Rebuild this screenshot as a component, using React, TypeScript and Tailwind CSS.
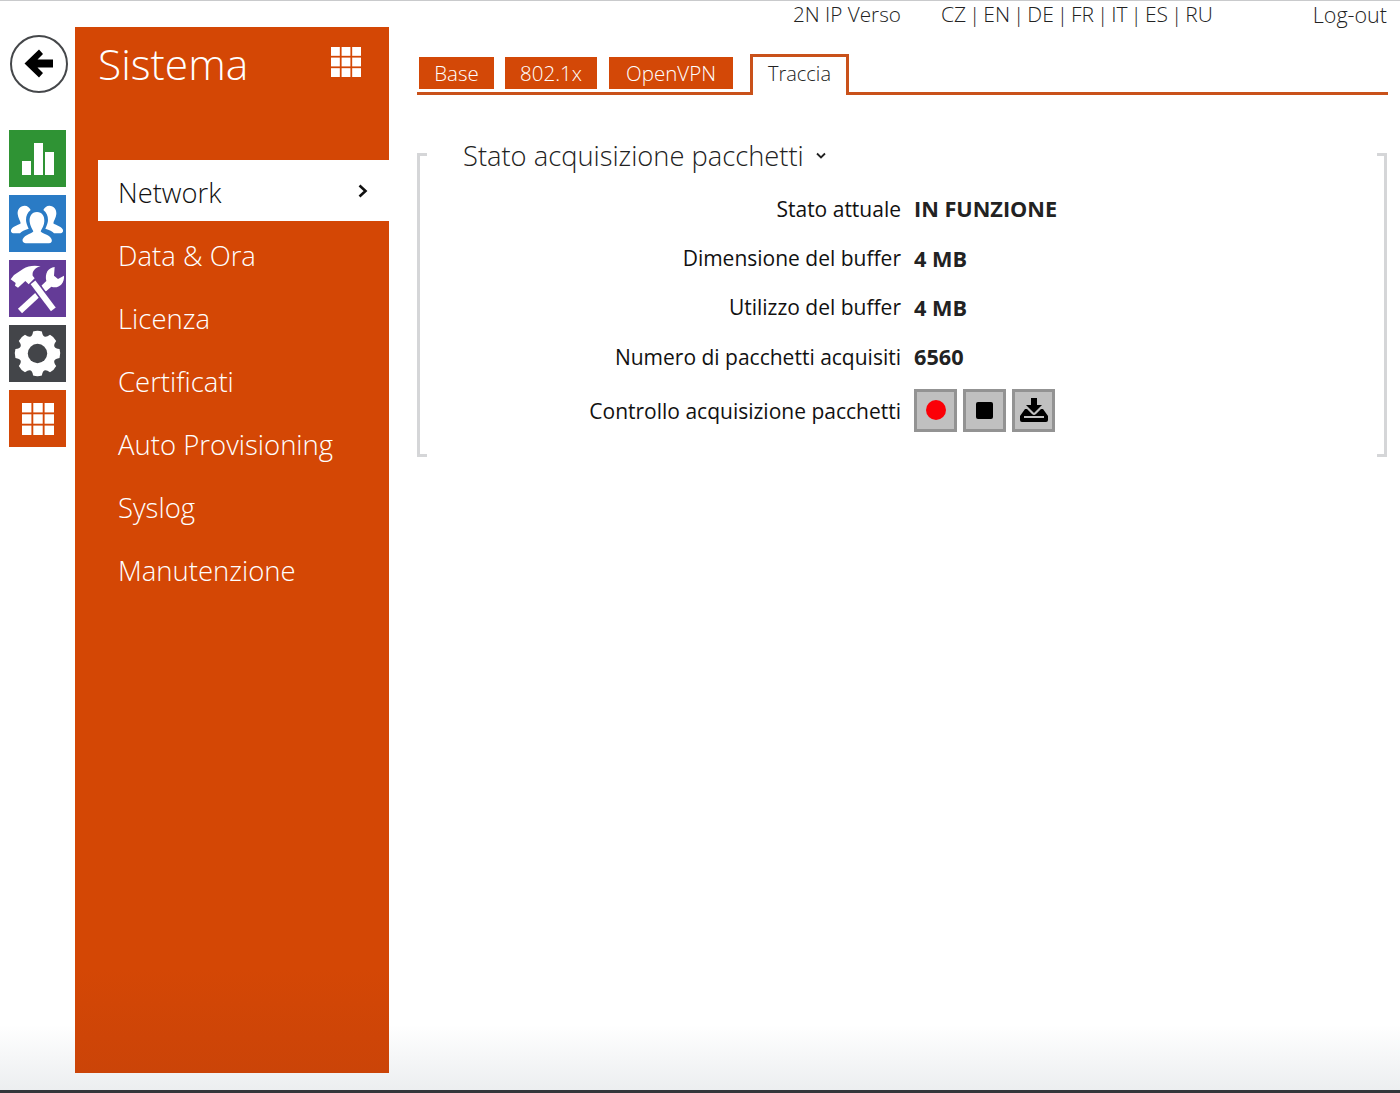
import React from 'react'

const menu = ['Data & Ora', 'Licenza', 'Certificati', 'Auto Provisioning', 'Syslog', 'Manutenzione']

const rows = [
  { label: 'Stato attuale', value: 'IN FUNZIONE' },
  { label: 'Dimensione del buffer', value: '4 MB' },
  { label: 'Utilizzo del buffer', value: '4 MB' },
  { label: 'Numero di pacchetti acquisiti', value: '6560' }
]

const Grid: React.FC<{ size: number }> = ({ size }) => {
  const cell = size / 3.4
  const step = (size - cell) / 2
  return (
    <svg width={size} height={size} viewBox={`0 0 ${size} ${size}`} fill="#fff">
      {[0, 1, 2].flatMap((r) =>
        [0, 1, 2].map((c) => (
          <rect key={`${r}-${c}`} x={c * step} y={r * step} width={cell} height={cell} />
        ))
      )}
    </svg>
  )
}

const Tile: React.FC<{ className: string; children: React.ReactNode }> = ({ className, children }) => (
  <div className={`w-[57px] h-[57px] flex items-center justify-center ${className}`}>{children}</div>
)

const gearPath = (() => {
  const teeth = 8
  const pts: string[] = []
  const p = (r: number, t: number) => `${(28.5 + r * Math.cos(t)).toFixed(2)} ${(28.5 + r * Math.sin(t)).toFixed(2)}`
  for (let i = 0; i < teeth; i++) {
    const a = (i / teeth) * Math.PI * 2 - Math.PI / 2
    const w = Math.PI / teeth
    pts.push(`${i === 0 ? 'M' : 'L'}${p(22.5, a - w * 0.5)}`)
    pts.push(`Q${p(23.5, a)} ${p(22.5, a + w * 0.5)}`)
    pts.push(`Q${p(14.5, a + w)} ${p(22.5, a + w * 1.5)}`)
  }
  return pts.join(' ') + ' Z'
})()

const personLeft =
  'M60 47 C46 47 38 58 39 72 C40 84 47 92 48 100 C46 104 26 108 20 118 C17 124 20 130 28 130 H46 C50 124 60 120 72 116 C68 108 64 98 64 90 C64 78 68 68 78 60 C74 52 68 47 60 47 Z'

const TabButton: React.FC<{ label: string; className: string }> = ({ label, className }) => (
  <button className={`h-[32px] mt-[3px] bg-[#d34807] text-white text-[20.5px] font-light flex items-center justify-center ${className}`}>
    <span className="mt-[1px]">{label}</span>
  </button>
)

const ControlButton: React.FC<{ children: React.ReactNode }> = ({ children }) => (
  <button className="w-[43px] h-[43px] bg-[#c0c0c0] border-[3px] border-[#939393] flex items-center justify-center">
    {children}
  </button>
)

export default function App() {
  return (
    <div
      className="w-[1400px] h-[1093px] overflow-hidden flex flex-col border-t border-[#c9cacc] border-b-[3px] border-b-[#33363a] text-[#111] bg-linear-to-b from-white from-[94%] to-[#eceef0]"
      style={{ fontFamily: '"Open Sans", "Noto Sans", sans-serif' }}
    >
      <div className="flex-1 flex min-h-0">
        <div className="w-[75px] shrink-0 pl-[9px] pt-[34px] flex flex-col gap-[8px]">
          <div className="w-[58px] h-[58px] ml-[1px] mb-[29px] rounded-full border-2 border-[#45474a] bg-white flex items-center justify-center">
            <svg width="30" height="30" viewBox="0 0 30 30" fill="#000">
              <path d="M15 .5 L19 5 L13.5 10.5 H29 V18.5 H13.5 L19 24 L15 28.5 L.5 14.5 Z" />
            </svg>
          </div>
          <Tile className="bg-[#2f9334]">
            <svg width="32" height="32" viewBox="0 0 32 32" fill="#fff">
              <rect x="0" y="18" width="9" height="14" />
              <rect x="12" y="0" width="9" height="32" />
              <rect x="23" y="9" width="9" height="23" />
            </svg>
          </Tile>
          <Tile className="bg-[#2a7bc5]">
            <svg width="57" height="57" viewBox="13 15 171 171" fill="#fff">
              <path d={personLeft} />
              <path d={personLeft} transform="translate(194 0) scale(-1 1)" />
              <path d="M97 66 C80 66 74 80 75 95 C76 108 84 118 86 124 C84 130 60 134 54 148 C52 156 58 160 66 160 H130 C140 160 144 154 140 146 C134 134 110 130 108 124 C112 116 119 106 119 94 C120 78 112 66 97 66 Z" />
            </svg>
          </Tile>
          <Tile className="bg-[#643b97]">
            <svg width="57" height="57" viewBox="13 15 171 171" fill="#fff">
              <path d="M150 36 C130 38 120 55 125 78 L110 92 L125 108 L140 95 C160 102 180 88 178 62 L160 72 L148 62 Z" />
              <line x1="46" y1="168" x2="122" y2="98" stroke="#fff" strokeWidth="18" />
              <line x1="85" y1="82" x2="146" y2="163" stroke="#643b97" strokeWidth="28" />
              <line x1="85" y1="82" x2="146" y2="163" stroke="#fff" strokeWidth="18" />
              <path d="M18 73 L28 60 L55 42 C70 32 90 30 108 34 C92 38 82 48 84 62 L90 70 L72 88 L62 78 L40 98 L31 92 L33 84 Z" />
            </svg>
          </Tile>
          <Tile className="bg-[#434549]">
            <svg width="57" height="57" viewBox="0 0 57 57">
              <path d={gearPath} fill="#fff" />
              <circle cx="28.5" cy="28.5" r="9.7" fill="#434549" />
            </svg>
          </Tile>
          <Tile className="bg-[#d34807]">
            <Grid size={32} />
          </Tile>
        </div>

        <div className="w-[314px] shrink-0 mt-[26px] mb-[17px] bg-linear-to-b from-[#d44705] from-[90%] to-[#cb4408] flex flex-col pl-[23px]">
          <div className="h-[133px] flex items-start justify-between pr-[28px]">
            <h1 className="text-[42.5px] font-light text-white leading-none mt-[16px]">Sistema</h1>
            <div className="mt-[20px]">
              <Grid size={30} />
            </div>
          </div>
          <div className="h-[61px] bg-white flex items-center justify-between pl-[20px] pr-[21px] text-[27.3px] font-light text-[#111]">
            <span className="mt-[6px]">Network</span>
            <svg width="10" height="14" viewBox="0 0 10 14" fill="none" stroke="#111" strokeWidth="2.6">
              <path d="M1.5 1.5 L7.5 7 L1.5 12.5" />
            </svg>
          </div>
          <ul className="pl-[20px] pt-[3px]">
            {menu.map((item) => (
              <li key={item} className="h-[63px] flex items-center text-[27.5px] font-light text-white">
                {item}
              </li>
            ))}
          </ul>
        </div>

        <div className="flex-1 min-w-0 pl-[28px] pr-[13px] flex flex-col">
          <div className="h-[26px] flex items-center text-[20.7px] font-light text-[#222]">
            <span className="ml-[376px] mt-[2px]">2N IP Verso</span>
            <span className="ml-[40px] mt-[2px] text-[21px] [word-spacing:-2.5px]">CZ | EN | DE | FR | IT | ES | RU</span>
            <span className="ml-auto mt-[2px] text-[21.5px]">Log-out</span>
          </div>
          <div className="h-[68px] -mr-[1px] pt-[27px] flex items-start border-b-[3px] border-[#c9511a] pl-[2px]">
            <TabButton label="Base" className="w-[75px]" />
            <TabButton label="802.1x" className="w-[92px] ml-[11px]" />
            <TabButton label="OpenVPN" className="w-[124px] ml-[12px]" />
            <div className="h-[41px] w-[99px] ml-[17px] pb-[4px] border-x-[3px] border-t-[3px] border-[#c9511a] bg-white flex items-center justify-center text-[20px] font-light text-[#222]">
              Traccia
            </div>
          </div>

          <div className="mt-[58px] h-[304px] flex">
            <div className="w-[10px] border-l-[3px] border-y-[3px] border-[#d5d6d8]" />
            <div className="flex-1">
              <div className="flex items-center gap-[12px] pl-[36px] h-[40px] -mt-[17px]">
                <span className="text-[27.3px] font-light text-[#222] whitespace-nowrap">Stato acquisizione pacchetti</span>
                <svg width="10" height="8" viewBox="0 0 10 8" fill="none" stroke="#222" strokeWidth="1.8">
                  <path d="M1 1.5 L5 5.5 L9 1.5" />
                </svg>
              </div>
              <div className="mt-[9px] flex flex-col text-[21px]">
                {rows.map((r) => (
                  <div key={r.label} className="h-[49.3px] flex items-center gap-[13px]">
                    <span className="w-[474px] text-right whitespace-nowrap">{r.label}</span>
                    <span className="font-bold text-[21.7px] text-[#222] whitespace-nowrap">{r.value}</span>
                  </div>
                ))}
                <div className="h-[46px] mt-[5px] flex items-center gap-[13px]">
                  <span className="w-[474px] mt-[3px] text-right whitespace-nowrap">Controllo acquisizione pacchetti</span>
                  <div className="flex gap-[6px]">
                    <ControlButton>
                      <span className="w-[20px] h-[20px] rounded-full bg-[#fb0007]" />
                    </ControlButton>
                    <ControlButton>
                      <span className="w-[17px] h-[17px] rounded-[2px] bg-black" />
                    </ControlButton>
                    <ControlButton>
                      <svg width="28" height="24" viewBox="0 0 28 24" fill="#000">
                        <path d="M11 0 H17 V7 H22 L14 15 L6 7 H11 Z" />
                        <path d="M5 11 H7 L12 16 Q14 18 16 16 L21 11 H23 L28 18 V22 Q28 24 26 24 H2 Q0 24 0 22 V18 Z M4 18 V20 H24 V18 Z" fillRule="evenodd" />
                      </svg>
                    </ControlButton>
                  </div>
                </div>
              </div>
            </div>
            <div className="w-[10px] border-r-[3px] border-y-[3px] border-[#d5d6d8]" />
          </div>
        </div>
      </div>
    </div>
  )
}
